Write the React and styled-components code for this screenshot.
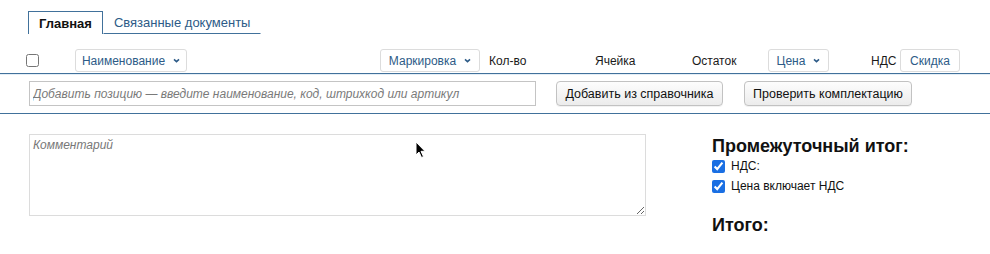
import React from 'react';
import styled, { createGlobalStyle } from 'styled-components';

const blue = '#2d5b87';
const line = '#41719b';

const GlobalStyle = createGlobalStyle`
  html, body {
    margin: 0;
    padding: 0;
    background: #fff;
    font-family: "Liberation Sans", Arial, Helvetica, sans-serif;
    font-size: 13px;
    color: #222;
  }
`

const Page = styled.div`
  position: relative;
  width: 990px;
  height: 254px;
  overflow: hidden;
`

const Tabs = styled.div`
  display: flex;
  padding: 11px 0 0 28px;
`

const Tab = styled.div`
  padding: 0 10px;
  font-size: 13px;
  border: 1px solid ${line};
  border-bottom: ${p => (p.$active ? 'none' : `1px solid ${line}`)};
  border-top-color: ${p => (p.$active ? line : 'transparent')};
  border-left-color: ${p => (p.$active ? line : 'transparent')};
  border-right-color: ${p => (p.$active ? line : 'transparent')};
  font-weight: ${p => (p.$active ? 700 : 400)};
  color: ${p => (p.$active ? '#111' : blue)};
  height: ${p => (p.$active ? '22px' : '20px')};
  margin-top: ${p => (p.$active ? '0' : '1px')};
  line-height: ${p => (p.$active ? '24px' : '20px')};
`

const HeaderRow = styled.div`
  display: grid;
  grid-template-columns: 49px 305px 109px 106px 97px 76px 103px 29px auto;
  align-items: center;
  padding: 15px 0 1px 26px;
  border-bottom: 1px solid ${line};
  box-shadow: 0 1px 0 #e4eef6;
`

const HeadCheck = styled.input`
  margin: 0;
  width: 13px;
  height: 13px;
`

const DropButton = styled.div`
  display: flex;
  align-items: center;
  justify-content: center;
  gap: 8px;
  height: 23px;
  width: ${p => p.$w}px;
  box-sizing: border-box;
  border: 1px solid #dcdcdc;
  border-radius: 3px;
  color: ${blue};
  font-size: 12px;
  background: #fff;
`

const ColLabel = styled.div`
  color: #1a1a1a;
  font-size: 12px;
`

const Caret = () => (
  <svg width="7" height="5" viewBox="0 0 7 5">
    <path d="M1 1.3 L3.5 3.6 L6 1.3" fill="none" stroke={blue} strokeWidth="1.6" />
  </svg>
)

const AddRow = styled.div`
  display: flex;
  align-items: center;
  gap: 20px;
  padding: 7px 0 7px 29px;
  border-bottom: 1px solid ${line};
`

const SearchInput = styled.input`
  width: 507px;
  height: 25px;
  box-sizing: border-box;
  border: 1px solid #c4c4c4;
  padding: 0 3px;
  font-family: inherit;
  font-size: 12px;
  &::placeholder {
    color: #7a7a7a;
    font-style: italic;
  }
`

const GreyButton = styled.button`
  height: 25px;
  width: ${p => p.$w}px;
  margin-left: ${p => p.$ml || 0}px;
  box-sizing: border-box;
  border: 1px solid #c2c2c2;
  border-radius: 4px;
  background: linear-gradient(#fdfdfd, #ececec);
  box-shadow: 0 1px 0 rgba(0, 0, 0, 0.05);
  font-family: inherit;
  font-size: 12.5px;
  color: #111;
  padding: 0;
`

const Bottom = styled.div`
  display: flex;
  padding: 20px 0 0 29px;
`

const Comment = styled.textarea`
  width: 617px;
  height: 82px;
  box-sizing: border-box;
  border: 1px solid #dcdcdc;
  padding: 3px 3px;
  font-family: inherit;
  font-size: 12px;
  resize: both;
  &::placeholder {
    color: #777;
    font-style: italic;
  }
`

const Totals = styled.div`
  display: flex;
  flex-direction: column;
  margin-left: 66px;
  padding-top: 2px;
`

const TotalTitle = styled.div`
  font-weight: 700;
  font-size: 18px;
  line-height: 20px;
  color: #111;
  margin-top: ${p => p.$mt || 0}px;
`

const CheckLine = styled.label`
  display: flex;
  align-items: center;
  gap: 6px;
  height: 20px;
  font-size: 12px;
  color: #111;
`

const BlueCheck = styled.input`
  margin: 0;
  width: 13px;
  height: 13px;
  accent-color: #1a6fe3;
`

const Cursor = styled.svg`
  position: absolute;
  left: 415px;
  top: 141px;
`

export default function App() {
  return (
    <Page>
      <GlobalStyle />
      <Tabs>
        <Tab $active>Главная</Tab>
        <Tab>Связанные документы</Tab>
      </Tabs>
      <HeaderRow>
        <HeadCheck type="checkbox" />
        <div>
          <DropButton $w={112}>Наименование <Caret /></DropButton>
        </div>
        <div>
          <DropButton $w={100}>Маркировка <Caret /></DropButton>
        </div>
        <ColLabel>Кол-во</ColLabel>
        <ColLabel>Ячейка</ColLabel>
        <ColLabel>Остаток</ColLabel>
        <div>
          <DropButton $w={61}>Цена <Caret /></DropButton>
        </div>
        <ColLabel>НДС</ColLabel>
        <div>
          <DropButton $w={60}>Скидка</DropButton>
        </div>
      </HeaderRow>
      <AddRow>
        <SearchInput placeholder="Добавить позицию — введите наименование, код, штрихкод или артикул" />
        <GreyButton $w={167}>Добавить из справочника</GreyButton>
        <GreyButton $w={168} $ml={1}>Проверить комплектацию</GreyButton>
      </AddRow>
      <Bottom>
        <Comment placeholder="Комментарий" />
        <Totals>
          <TotalTitle>Промежуточный итог:</TotalTitle>
          <CheckLine><BlueCheck type="checkbox" defaultChecked /> НДС:</CheckLine>
          <CheckLine><BlueCheck type="checkbox" defaultChecked /> Цена включает НДС</CheckLine>
          <TotalTitle $mt={19}>Итого:</TotalTitle>
        </Totals>
      </Bottom>
      <Cursor width="12" height="18" viewBox="0 0 12 18">
        <path d="M1 1 L1 14 L4 11 L6.5 16.5 L8.5 15.6 L6 10.3 L10 10.3 Z" fill="#000" stroke="#fff" strokeWidth="1" />
      </Cursor>
    </Page>
  );
}
